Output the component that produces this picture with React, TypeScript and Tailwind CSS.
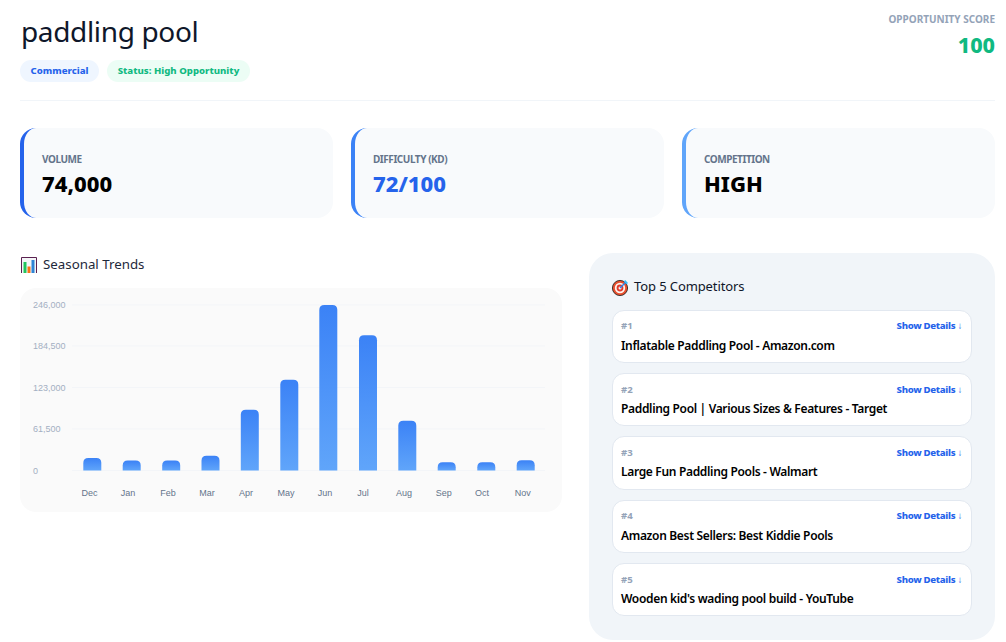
const font = "font-['Noto_Sans','Open_Sans',sans-serif]";

const bars = [
  { m: "Dec", x: 83.3, top: 458, lx: 89.5 },
  { m: "Jan", x: 122.7, top: 460.6, lx: 128 },
  { m: "Feb", x: 162.2, top: 460.6, lx: 168 },
  { m: "Mar", x: 201.5, top: 455.7, lx: 207 },
  { m: "Apr", x: 240.8, top: 409.7, lx: 246 },
  { m: "May", x: 280.3, top: 379.7, lx: 286 },
  { m: "Jun", x: 319.3, top: 305, lx: 325 },
  { m: "Jul", x: 359, top: 335.3, lx: 363 },
  { m: "Aug", x: 398.3, top: 420.7, lx: 404 },
  { m: "Sep", x: 437.7, top: 462.3, lx: 443.7 },
  { m: "Oct", x: 477.3, top: 462.3, lx: 482 },
  { m: "Nov", x: 516.7, top: 460.3, lx: 522.7 },
];
const grid = [
  { v: "246,000", y: 305 },
  { v: "184,500", y: 346 },
  { v: "123,000", y: 387.5 },
  { v: "61,500", y: 429 },
  { v: "0", y: 470.5 },
];
const comps = [
  "Inflatable Paddling Pool - Amazon.com",
  "Paddling Pool | Various Sizes & Features - Target",
  "Large Fun Paddling Pools - Walmart",
  "Amazon Best Sellers: Best Kiddie Pools",
  "Wooden kid's wading pool build - YouTube",
];

function Chart() {
  const ox = 20, oy = 288;
  return (
    <svg width="542" height="224" viewBox={`${ox} ${oy} 542 224`} className="block">
      <defs>
        <linearGradient id="barFill" x1="0" y1="0" x2="0" y2="1">
          <stop offset="0" stopColor="#3b82f6" />
          <stop offset="1" stopColor="#60a5fa" />
        </linearGradient>
      </defs>
      {grid.map((g) => (
        <g key={g.v}>
          <line x1="72" x2="545" y1={g.y} y2={g.y} stroke="#f3f5f8" strokeWidth="1" />
          <text x="33" y={g.y + 3} fontFamily="Liberation Sans, Arial, sans-serif" fontSize="9" fill="#a3afc2">{g.v}</text>
        </g>
      ))}
      {bars.map((b) => {
        const r = Math.min(5, 470.5 - b.top);
        return (
          <g key={b.m}>
            <path
              d={`M${b.x} 470.5V${b.top + r}Q${b.x} ${b.top} ${b.x + r} ${b.top}H${b.x + 18 - r}Q${b.x + 18} ${b.top} ${b.x + 18} ${b.top + r}V470.5Z`}
              fill="url(#barFill)"
            />
            <text x={b.lx} y="495.5" textAnchor="middle" fontFamily="Liberation Sans, Arial, sans-serif" fontSize="9" fill="#64748b">{b.m}</text>
          </g>
        );
      })}
    </svg>
  );
}

function ChartEmoji() {
  return (
    <svg width="16" height="16" viewBox="0 0 16 16" className="shrink-0">
      <rect x="0" y="0" width="16" height="16" fill="#f4f6f8" />
      <path d="M0.5 16V0.5H15.5V16" fill="none" stroke="#5b2150" strokeWidth="1" />
      <rect x="2.5" y="5" width="3" height="11" fill="#22c55e" />
      <rect x="6.5" y="9.5" width="3" height="6.5" fill="#f97316" />
      <rect x="10.5" y="3" width="3" height="13" fill="#2f86d6" />
    </svg>
  );
}

function TargetEmoji() {
  return (
    <svg width="17" height="17" viewBox="0 0 17 17" className="shrink-0">
      <circle cx="8" cy="9" r="7.6" fill="#e8502f" stroke="#1c1917" strokeWidth="0.8" />
      <circle cx="8" cy="9" r="5.2" fill="#fdf4ee" />
      <circle cx="8" cy="9" r="3.4" fill="#e23b2e" />
      <circle cx="8" cy="9" r="1.5" fill="#fdf4ee" />
      <path d="M8 9L13.5 3.5" stroke="#2f80ed" strokeWidth="1.5" />
      <path d="M12.5 1.8l2.8 2.8" stroke="#38bdf8" strokeWidth="2" />
    </svg>
  );
}

function Stat({ label, value, border, color }: { label: string; value: string; border: string; color: string }) {
  return (
    <div className={`h-[90px] rounded-2xl bg-[#f8fafc] border-l-4 pl-[18px] pt-[24px] ${border}`}>
      <div className="text-[10px] leading-[14px] font-bold tracking-[-0.45px] text-[#64748b]">{label}</div>
      <div className={`mt-[2px] text-[22px] leading-[30px] font-extrabold ${color}`}>{value}</div>
    </div>
  );
}

export default function App() {
  return (
    <div className={`w-[1006px] h-[642px] overflow-hidden bg-white pl-5 pr-[11px] ${font}`}>
      <header className="h-[101px] border-b border-[#f1f5f9] flex justify-between">
        <div>
          <h1 className="pt-[11px] pb-[1px] pl-[1px] text-[28px] leading-[40px] font-normal tracking-[-0.35px] text-[#0f172a]">paddling pool</h1>
          <div className="mt-[8px] flex gap-2">
            <span className="h-[22px] w-[79px] flex items-center justify-center rounded-full bg-[#eff6ff] text-[9.6px] font-extrabold text-[#2563eb]">Commercial</span>
            <span className="h-[22px] w-[143px] flex items-center justify-center rounded-full bg-[#ecfdf5] text-[9.6px] font-extrabold text-[#10b981]">Status: High Opportunity</span>
          </div>
        </div>
        <div className="text-right pt-[12px]">
          <div className="text-[10px] leading-[14px] font-bold text-[#94a3b8]">OPPORTUNITY SCORE</div>
          <div className="mt-[5px] text-[21.5px] leading-[28px] font-extrabold text-[#10b981]">100</div>
        </div>
      </header>

      <div className="mt-[27px] grid grid-cols-3 gap-[18px]">
        <Stat label="VOLUME" value="74,000" border="border-[#2563eb]" color="text-black" />
        <Stat label="DIFFICULTY (KD)" value="72/100" border="border-[#3b82f6]" color="text-[#2563eb]" />
        <Stat label="COMPETITION" value="HIGH" border="border-[#60a5fa]" color="text-black" />
      </div>

      <div className="mt-[35px] flex gap-[27px] items-start">
        <div className="w-[542px]">
          <div className="h-[22px] pt-[1px] pl-[1px] flex items-center gap-[6px] text-[13.3px] text-[#1e293b]">
            <ChartEmoji />
            <span>Seasonal Trends</span>
          </div>
          <div className="mt-[13px] rounded-2xl bg-[#fafafa] overflow-hidden">
            <Chart />
          </div>
        </div>
        <div className="w-[406px] h-[387px] rounded-3xl bg-[#f1f5f9] px-[23px] pt-[24px]">
          <div className="h-[20px] flex items-center gap-[5px] text-[13px] tracking-[-0.1px] text-[#0f172a]">
            <TargetEmoji />
            <span>Top 5 Competitors</span>
          </div>
          <div className="mt-[12.5px] flex flex-col gap-[10px]">
            {comps.map((c, i) => (
              <div key={c} className="h-[53.4px] rounded-xl bg-white border border-[#e2e8f0] pl-[8px] pr-[9px] pt-[9px]">
                <div className="flex justify-between items-center h-[14px]">
                  <span className="text-[9.6px] font-bold text-[#94a3b8]">#{i + 1}</span>
                  <span className="text-[9.6px] font-extrabold tracking-[-0.3px] text-[#2563eb]">Show Details ↓</span>
                </div>
                <div className="mt-[3px] text-[12px] leading-[18px] font-semibold tracking-[-0.33px] text-black">{c}</div>
              </div>
            ))}
          </div>
        </div>
      </div>
    </div>
  );
}
